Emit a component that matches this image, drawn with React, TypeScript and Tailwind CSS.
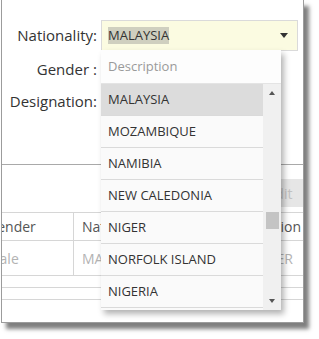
export default function App() {
  const countries = [
    'MALAYSIA',
    'MOZAMBIQUE',
    'NAMIBIA',
    'NEW CALEDONIA',
    'NIGER',
    'NORFOLK ISLAND',
    'NIGERIA',
  ];

  return (
    <div className="w-[319px] h-[339px] bg-white font-['Open_Sans',sans-serif] text-[#333]">
      <div className="relative ml-[1px] w-[303px] h-[323px] border-x border-b border-[#9c9c9c] bg-white shadow-[5px_6px_4px_rgba(0,0,0,0.5)]">
        {/* form */}
        <div className="pt-[19px]">
          <FormRow label="Nationality">
            <div className="flex items-center w-[197px] h-[31px] border border-[#dadada] bg-[#fbfbe1] pl-[6px] pr-[9px]">
              <span className="bg-[#cfcfbf] text-[13px] leading-[17px] text-[#333]">MALAYSIA</span>
              <span className="ml-auto border-x-[4px] border-t-[5px] border-x-transparent border-t-[#333]" />
            </div>
          </FormRow>
          <FormRow label="Gender" gap className="mt-[2px]" />
          <FormRow label="Designation" />
        </div>

        <div className="mt-[47px] border-t border-[#a9a9a9]" />

        <div className="flex justify-end mt-[14px]">
          <div className="w-[46px] h-[28px] bg-[#e6e6e6] flex items-center justify-center text-[14px] text-[#c2c2c2]">
            Edit
          </div>
        </div>

        {/* grid */}
        <div className="mt-[5px] overflow-hidden">
          <div className="-ml-[23px] w-[340px] text-[14px]">
            <div className="flex h-[29px] border-y border-[#d6d6d6] text-[#555]">
              <div className="w-[96px] pl-[8px] flex items-center border-r border-[#d6d6d6]">Gender</div>
              <div className="w-[155px] pl-[8px] flex items-center border-r border-[#d6d6d6]">Nationality</div>
              <div className="w-[92px] pl-[8px] flex items-center justify-end pr-[18px]">Designation</div>
            </div>
            <div className="flex h-[35px] border-b border-[#d6d6d6] text-[#b3b3b3]">
              <div className="w-[96px] pl-[8px] flex items-center border-r border-[#d6d6d6]">Male</div>
              <div className="w-[155px] pl-[8px] flex items-center border-r border-[#d6d6d6]">MALAYSIA</div>
              <div className="w-[92px] pl-[8px] flex items-center justify-end pr-[26px]">DESIGNER</div>
            </div>
            <div className="h-[12px] border-b border-[#d6d6d6]" />
            <div className="h-[12px] border-b border-[#d6d6d6]" />
          </div>
        </div>

        {/* dropdown */}
        <div className="absolute left-[99px] top-[50px] w-[180px] h-[260px] bg-[#fafafa] shadow-[3px_4px_6px_rgba(0,0,0,0.3)] flex flex-col">
          <div className="h-[34px] shrink-0 flex items-center pl-[7px] text-[13px] text-[#9a9a9a] border-b border-[#e4e4e4] bg-[#fdfdfd]">
            Description
          </div>
          <div className="flex flex-1 min-h-0">
            <div className="w-[162px] overflow-hidden">
              {countries.map((c, i) => (
                <div
                  key={c}
                  className={`h-[32px] flex items-center pl-[7px] text-[13px] text-[#333] border-b border-[#dadada] ${
                    i === 0 ? 'bg-[#dcdcdc]' : ''
                  }`}
                >
                  {c}
                </div>
              ))}
            </div>
            <div className="w-[18px] bg-[#f0f0f0] flex flex-col items-center pt-[7px] pb-[7px]">
              <span className="border-x-[3px] border-b-[4px] border-x-transparent border-b-[#555]" />
              <div className="mt-[117px] w-[13px] h-[17px] bg-[#c4c4c4]" />
              <span className="mt-auto border-x-[3px] border-t-[4px] border-x-transparent border-t-[#555]" />
            </div>
          </div>
        </div>
      </div>
    </div>
  );
}

function FormRow({
  label,
  gap,
  className = '',
  children,
}: {
  label: string;
  gap?: boolean;
  className?: string;
  children?: React.ReactNode;
}) {
  return (
    <div className={`flex items-center h-[32px] ${className}`}>
      <div className="w-[99px] flex justify-end pr-[4px] text-[15px] text-[#333]">
        <span className={gap ? 'pr-[4px]' : ''}>{label}</span>
        <span>:</span>
      </div>
      {children}
    </div>
  );
}
